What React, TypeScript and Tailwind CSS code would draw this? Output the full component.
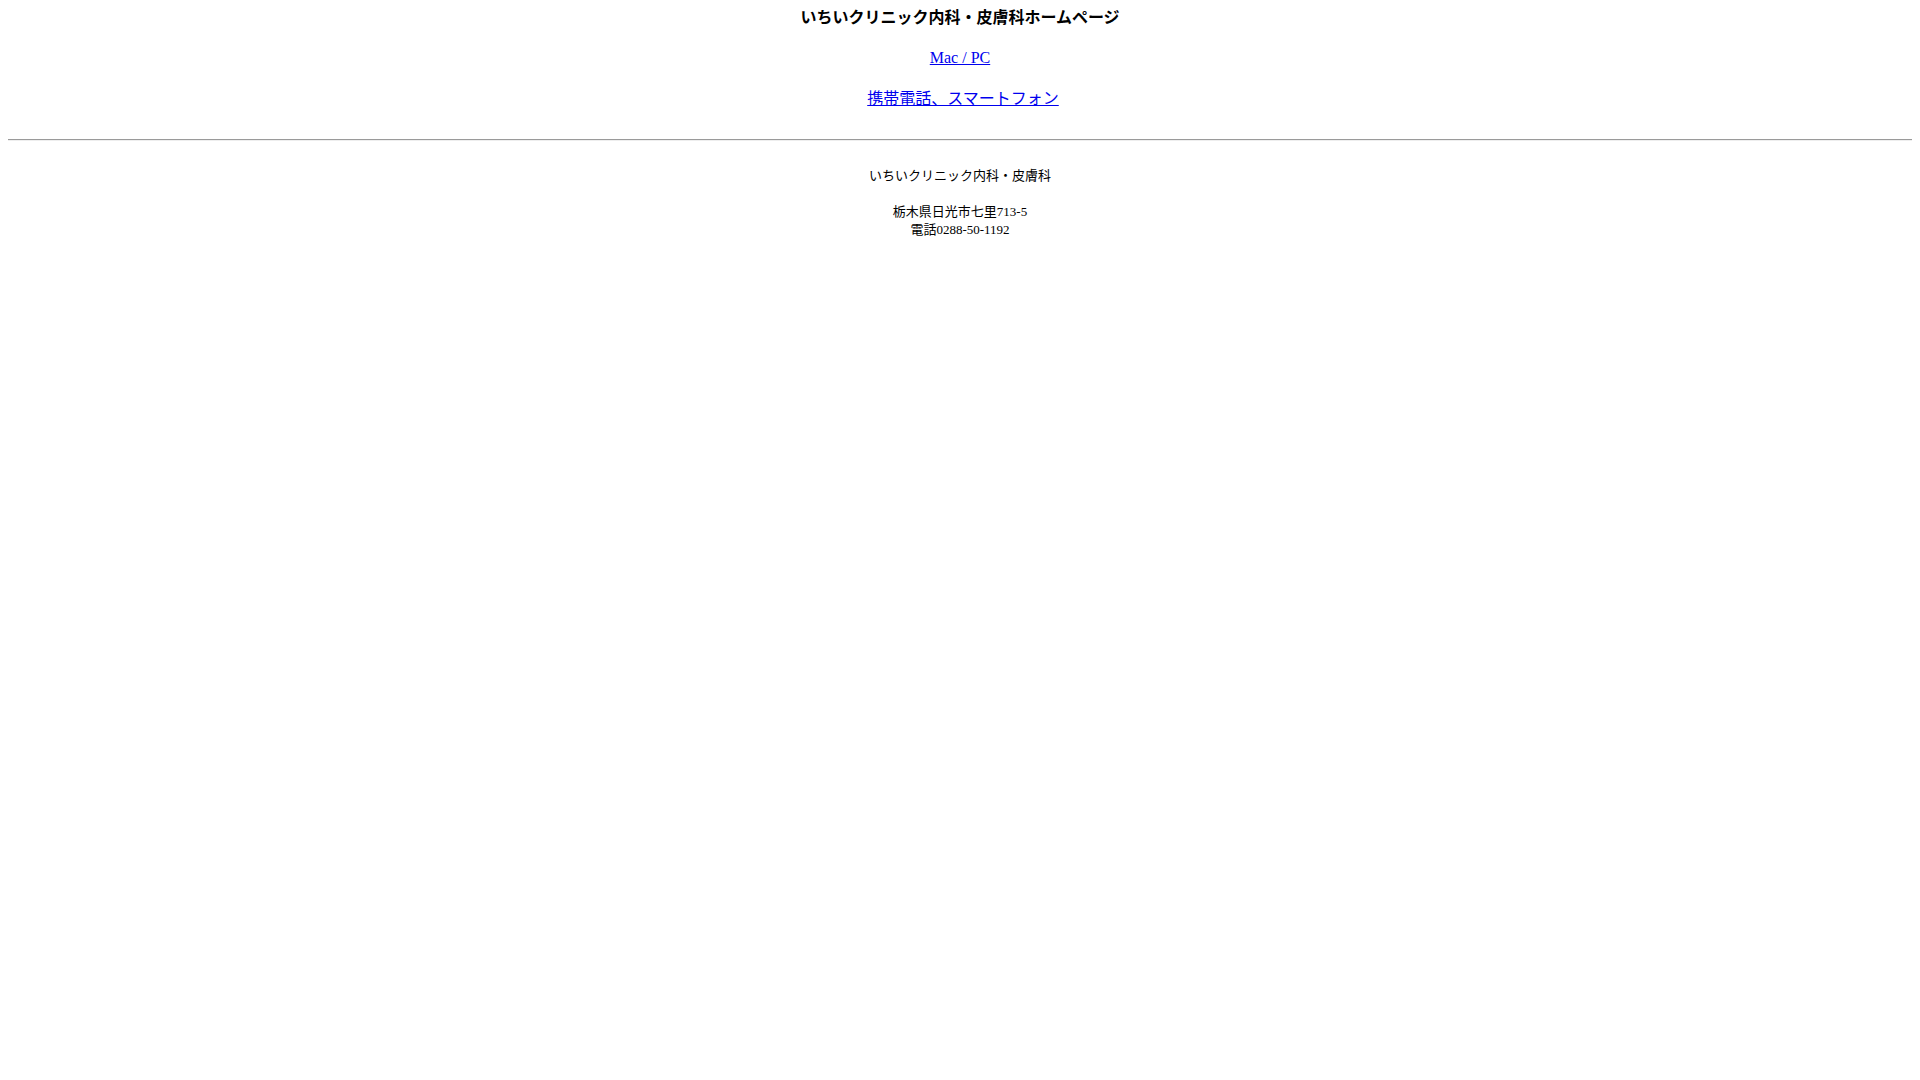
export default function App() {
  return (
    <div className="min-h-screen bg-white px-2 pt-[9px] text-black font-['Liberation_Serif','Noto_Sans_CJK_JP',serif]">
      <div className="flex flex-col items-center">
        <h1 className="text-[16px] leading-[18px] font-bold">いちいクリニック内科・皮膚科ホームページ</h1>
        <a href="#" className="mt-[21px] text-[16px] leading-[20px] text-[#0000ee] underline">
          Mac / PC
        </a>
        <a href="#" className="mt-[21px] ml-[6px] text-[16px] leading-[20px] text-[#0000ee] underline">
          携帯電話、スマートフォン
        </a>
      </div>

      <hr className="mt-[30px] h-[2px] border-0 border-t border-b border-t-[#9a9a9a] border-b-[#eeeeee]" />

      <div className="flex flex-col items-center text-[13px] leading-[18px]">
        <p className="mt-[26px]">いちいクリニック内科・皮膚科</p>
        <p className="mt-[18px]">栃木県日光市七里713-5</p>
        <p>電話0288-50-1192</p>
      </div>
    </div>
  )
}
